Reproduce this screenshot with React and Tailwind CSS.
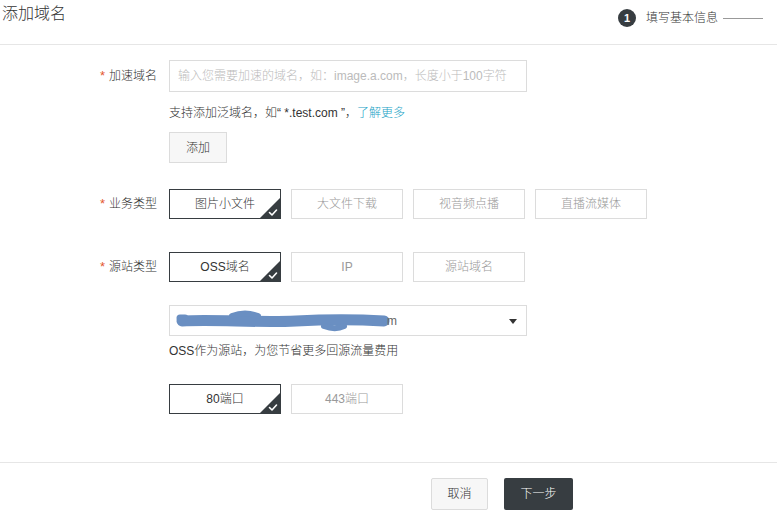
const FONT = "font-['Liberation_Sans','Noto_Sans_CJK_SC',sans-serif]"

function Check() {
  return (
    <span className="absolute right-0 bottom-0 w-[20px] h-[20px]">
      <svg width="20" height="20" viewBox="0 0 20 20" className="block">
        <polygon points="20,0 20,20 0,20" fill="#373d41" />
        <path d="M9.5 14.5 L12 17 L16.5 12" stroke="#fff" strokeWidth="1.6" fill="none" strokeLinecap="round" strokeLinejoin="round" />
      </svg>
    </span>
  )
}

function Option({ label, selected }) {
  return (
    <div
      className={`relative w-[112px] h-[30px] flex items-center justify-center text-[12px] border ${
        selected ? 'border-[#373d41] text-[#333]' : 'border-[#dcdcdc] text-[#999]'
      }`}
    >
      {label}
      {selected && <Check />}
    </div>
  )
}

function Label({ text }) {
  return (
    <div className="w-[169px] shrink-0 pr-[12px] flex justify-end items-center text-[12px] text-[#333]">
      <span className="text-[#e4572e] mr-[4px] text-[13px]">*</span>
      {text}
    </div>
  )
}

export default function App() {
  return (
    <div className={`w-[777px] h-[527px] bg-white overflow-hidden font-light ${FONT}`}>
      <div className="h-[45px] border-b border-[#e6e6e6] flex justify-between">
        <div className="pl-[2px] pt-[4px] text-[16px] leading-[20px] text-[#333]">添加域名</div>
        <div className="flex items-center h-[36px] pr-[14px]">
          <span className="w-[18px] h-[18px] rounded-full bg-[#373d41] text-white text-[11px] font-bold flex items-center justify-center">
            1
          </span>
          <span className="ml-[10px] text-[12px] text-[#333]">填写基本信息</span>
          <span className="ml-[5px] w-[40px] h-px bg-[#999]" />
        </div>
      </div>

      <div className="pt-[15px]">
        <div className="flex items-center">
          <Label text="加速域名" />
          <div className="w-[358px] h-[32px] border border-[#dcdcdc] flex items-center px-[8px] text-[12px] text-[#bbb]">
            输入您需要加速的域名，如：image.a.com，长度小于100字符
          </div>
        </div>
        <div className="pl-[169px] mt-[12px] text-[12px] leading-[18px] text-[#333]">
          支持添加泛域名，如“ *.test.com ”，<span className="text-[#1ba3c6]">了解更多</span>
        </div>
        <div className="pl-[169px] mt-[10px]">
          <div className="w-[58px] h-[31px] border border-[#dcdcdc] bg-[#f7f7f7] flex items-center justify-center text-[12px] text-[#333]">
            添加
          </div>
        </div>

        <div className="flex items-center mt-[26px]">
          <Label text="业务类型" />
          <div className="flex gap-[10px]">
            <Option label="图片小文件" selected />
            <Option label="大文件下载" />
            <Option label="视音频点播" />
            <Option label="直播流媒体" />
          </div>
        </div>

        <div className="flex items-center mt-[33px]">
          <Label text="源站类型" />
          <div className="flex gap-[10px]">
            <Option label="OSS域名" selected />
            <Option label="IP" />
            <Option label="源站域名" />
          </div>
        </div>

        <div className="pl-[169px] mt-[23px]">
          <div className="relative w-[358px] h-[31px] border border-[#dcdcdc] flex items-center">
            <svg width="220" height="26" viewBox="0 0 220 26" className="ml-[6px]">
              <path d="M6 13 C40 11, 80 15, 120 13 S190 12, 208 13" stroke="#6a8fc2" strokeWidth="11" fill="none" strokeLinecap="round" />
              <path d="M56 8 C64 5, 74 5, 82 8" stroke="#6a8fc2" strokeWidth="6" fill="none" strokeLinecap="round" />
              <path d="M148 18 C156 21, 162 21, 168 18" stroke="#6a8fc2" strokeWidth="6" fill="none" strokeLinecap="round" />
              <path d="M4 10 L9 10" stroke="#6a8fc2" strokeWidth="7" strokeLinecap="round" />
            </svg>
            <span className="text-[12px] text-[#666] -ml-[9px]">m</span>
            <svg width="8" height="5" viewBox="0 0 8 5" className="absolute right-[9px] top-[13px]">
              <polygon points="0,0 8,0 4,5" fill="#333" />
            </svg>
          </div>
        </div>
        <div className="pl-[169px] mt-[6px] text-[12px] leading-[18px] text-[#333]">
          OSS作为源站，为您节省更多回源流量费用
        </div>

        <div className="pl-[169px] mt-[24px] flex gap-[10px]">
          <Option label="80端口" selected />
          <Option label="443端口" />
        </div>
      </div>

      <div className="mt-[48px] border-t border-[#e6e6e6] pt-[15px] pl-[431px] flex gap-[16px]">
        <div className="w-[57px] h-[32px] border border-[#dcdcdc] bg-[#f7f7f7] rounded-[2px] flex items-center justify-center text-[12px] text-[#333]">
          取消
        </div>
        <div className="w-[69px] h-[32px] bg-[#373d41] rounded-[2px] flex items-center justify-center text-[12px] text-white">
          下一步
        </div>
      </div>
    </div>
  )
}
